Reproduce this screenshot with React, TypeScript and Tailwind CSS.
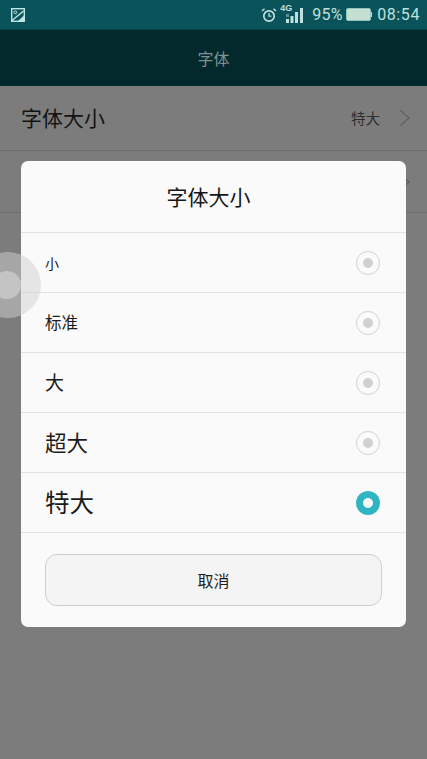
const font = { fontFamily: '"Noto Sans CJK SC", "Liberation Sans", sans-serif' }

const options = [
  { label: '小', size: 'text-[14px] mt-[1px]' },
  { label: '标准', size: 'text-[16.5px] mb-[1px]' },
  { label: '大', size: 'text-[19px]' },
  { label: '超大', size: 'text-[21.5px]' },
  { label: '特大', size: 'text-[24.5px]', checked: true },
]

function Radio({ checked }: { checked?: boolean }) {
  if (checked) {
    return (
      <div className="w-6 h-6 rounded-full bg-[#2fb5c1] flex items-center justify-center">
        <div className="w-2.5 h-2.5 rounded-full bg-[#fafafa]" />
      </div>
    )
  }
  return (
    <div className="w-6 h-6 rounded-full border border-[#d2d2d2] flex items-center justify-center">
      <div className="w-2.5 h-2.5 rounded-full bg-[#d0d0d0]" />
    </div>
  )
}

function Chevron({ className }: { className: string }) {
  return (
    <svg className={className} width="12" height="18" viewBox="0 0 12 18" fill="none" stroke="currentColor" strokeWidth="1.2">
      <path d="M1.5 1.5L10 9L1.5 16.5" />
    </svg>
  )
}

function StatusIcons() {
  return (
    <div className="flex items-center text-[#bfe0dd]">
      <svg width="16" height="16" viewBox="0 0 16 16" fill="none" stroke="currentColor" strokeWidth="1.7">
        <circle cx="8" cy="9" r="5.2" />
        <path d="M8 6v3.2h2.4" strokeWidth="1.3" />
        <path d="M1 4l2.5-2.2M15 4l-2.5-2.2" strokeWidth="1.5" />
      </svg>
      <div className="relative w-[24px] h-[20px] ml-[3px]">
        <span className="absolute left-0 top-[-2px] text-[9px] leading-[10px] font-bold" style={{ fontFamily: '"Liberation Sans", sans-serif' }}>4G</span>
        <svg className="absolute left-0 top-0" width="24" height="20" viewBox="0 0 24 20" fill="currentColor">
          <rect x="6" y="9" width="3" height="3" opacity="0.45" />
          <rect x="6" y="14" width="3" height="4" />
          <rect x="10.5" y="11" width="3" height="7" />
          <rect x="15" y="7" width="3" height="11" />
          <rect x="20" y="3" width="3" height="15" />
        </svg>
      </div>
      <span className="ml-[8px] text-[16px] tracking-[0.2px]" style={{ fontFamily: 'Roboto, sans-serif' }}>95%</span>
      <div className="flex items-center ml-[3px]">
        <div className="w-[25px] h-[13px] rounded-[2px] border border-[#8fc4c0] bg-[#c5dfd2]" />
        <div className="w-[1.5px] h-[5px] bg-[#bfe0dd]" />
      </div>
      <span className="ml-[5px] text-[16px] tracking-[0.6px]" style={{ fontFamily: 'Roboto, sans-serif' }}>08:54</span>
    </div>
  )
}

export default function App() {
  return (
    <div className="relative w-[427px] h-[759px] overflow-hidden bg-[#7c7c7c]" style={font}>
      {/* status bar */}
      <div className="h-[29px] bg-[#0a535b] flex items-center justify-between pl-[11px] pr-[7px]">
        <svg width="14" height="14" viewBox="0 0 14 14" fill="none" stroke="#bfe6e4" strokeWidth="1.4">
          <rect x="0.7" y="0.7" width="12.6" height="12.6" />
          <circle cx="4.3" cy="4.3" r="1.4" strokeWidth="1" />
          <path d="M1 12.5L12.5 3" />
          <path d="M7 13l6-5.5v5.5z" fill="#bfe6e4" stroke="none" />
        </svg>
        <StatusIcons />
      </div>

      {/* app bar */}
      <div className="h-[57px] bg-[#04292d] flex items-center justify-center border-t border-[#0b4046]">
        <span className="text-[16px] text-[#7f9190]">字体</span>
      </div>

      {/* settings rows behind the dim */}
      <div className="h-[65px] border-b border-[#6c6c6c] flex items-center justify-between pl-[21px] pr-[16px]">
        <span className="text-[21px] text-[#131313]">字体大小</span>
        <div className="flex items-center gap-[19px]">
          <span className="text-[14.5px] text-[#2e2e2e]">特大</span>
          <Chevron className="text-[#5f5f5f]" />
        </div>
      </div>
      <div className="h-[62px] border-b border-[#6c6c6c] flex items-center justify-end pr-[16px]">
        <Chevron className="text-[#5f5f5f]" />
      </div>

      {/* dialog */}
      <div className="absolute left-[21px] top-[161px] w-[385px] h-[466px] bg-[#fafafa] rounded-[7px] flex flex-col">
        <div className="h-[72px] flex items-center justify-center border-b border-[#e2e2e2] pr-[10px]">
          <span className="text-[21px] text-[#161616]">字体大小</span>
        </div>
        {options.map(o => (
          <div key={o.label} className="h-[60px] flex items-center justify-between pl-[24px] pr-[26px] border-b border-[#e2e2e2]">
            <span className={`${o.size} text-[#1c1c1c]`}>{o.label}</span>
            <Radio checked={o.checked} />
          </div>
        ))}
        <div className="flex-1 px-[24px] pt-[21px]">
          <div className="h-[52px] w-[337px] rounded-[12px] border border-[#cfcfcf] bg-[#f4f4f4] flex items-center justify-center">
            <span className="text-[16px] text-[#1c1c1c]">取消</span>
          </div>
        </div>
      </div>

      {/* floating assist ball */}
      <div className="absolute left-[-25px] top-[252px] w-[66px] h-[66px] rounded-full bg-[#cfcfcf]/50 flex items-center justify-center">
        <div className="w-[28px] h-[28px] rounded-full bg-[#c4c4c4] mr-[3px]" />
      </div>
    </div>
  )
}
